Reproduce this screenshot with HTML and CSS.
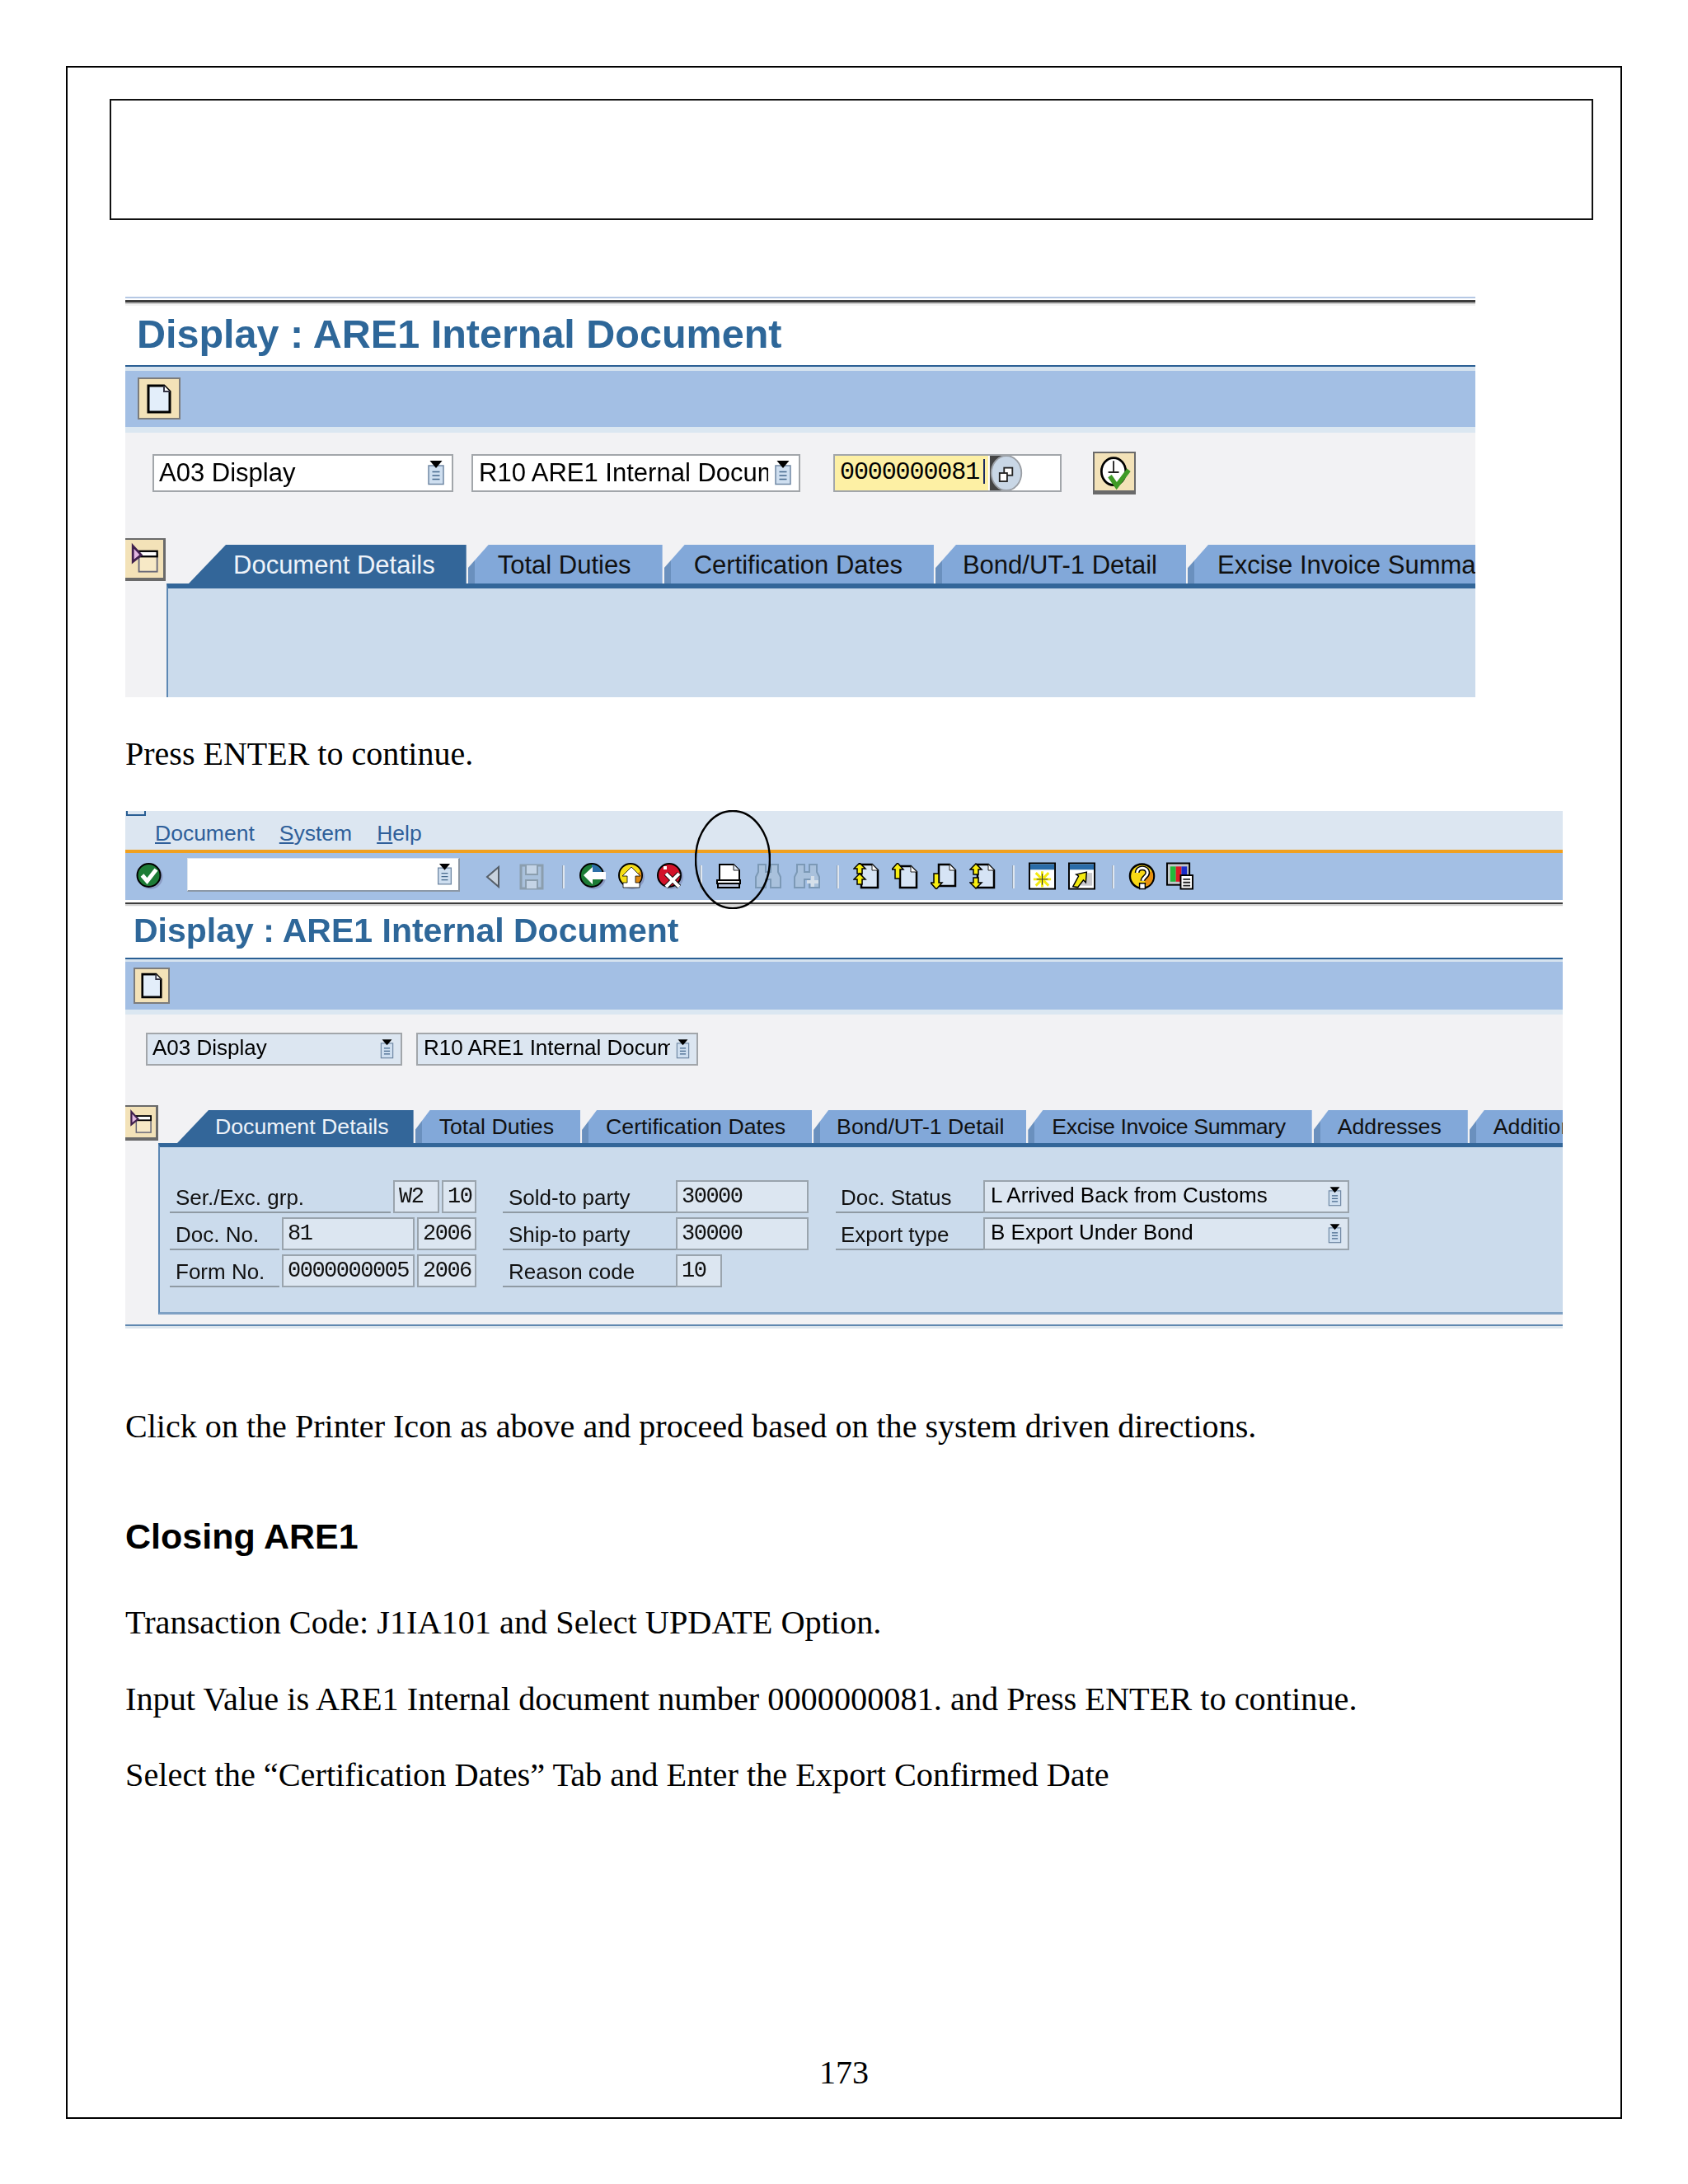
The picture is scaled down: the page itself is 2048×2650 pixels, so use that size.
FILE: index.html
```html
<!DOCTYPE html>
<html lang="en">
<head>
  <meta charset="UTF-8">
  <title>Closing ARE1</title>
  <link rel="stylesheet" href="styles.css">
</head>
<body>
  <svg class="defs">
    <symbol id="ic-drop" viewBox="0 0 16 20">
      <rect x="2" y="4" width="12" height="15" fill="#cfdff0" stroke="#7088a4"/>
      <path d="M5 9h6M5 12h6M5 15h6" stroke="#46688c"/>
      <path d="M3 0h10L8 6z" fill="#000"/>
    </symbol>
    <symbol id="ic-page" viewBox="0 0 30 36">
      <path d="M2 2h19l7 7v25H2z" fill="#e3eefa" stroke="#000" stroke-width="3"/>
      <path d="M21 2v7h7" fill="#fff" stroke="#334" stroke-width="2"/>
    </symbol>
    <symbol id="ic-side" viewBox="0 0 48 50">
      <rect x="17" y="19" width="24" height="23" fill="#f7e9c6" stroke="#667" stroke-width="2"/>
      <rect x="12" y="15" width="29" height="7" fill="#fff" stroke="#000" stroke-width="2.5"/>
      <path d="M9 8l11 12-11 9z" fill="#e2b8e2" stroke="#40204e" stroke-width="3"/>
    </symbol>
    <symbol id="ic-clock" viewBox="0 0 50 50">
      <ellipse cx="24" cy="24" rx="16" ry="18" fill="#fff" stroke="#000" stroke-width="3"/>
      <path d="M24 10v15M17 25h14" stroke="#222" stroke-width="2"/>
      <path d="M19 30l9 13L44 22" fill="none" stroke="#3f9a26" stroke-width="6"/>
    </symbol>
    <symbol id="ic-search" viewBox="0 0 44 46">
      <rect x="0" y="0" width="26" height="46" fill="#444"/>
      <ellipse cx="22" cy="23" rx="20" ry="23" fill="#c9d7e6" stroke="#9a9ea4" stroke-width="2"/>
      <rect x="19" y="16" width="11" height="10" fill="#fff" stroke="#222" stroke-width="2"/>
      <rect x="13" y="23" width="10" height="11" fill="#fff" stroke="#222" stroke-width="2"/>
    </symbol>
    <symbol id="ic-ok" viewBox="0 0 32 32">
      <circle cx="17" cy="17" r="15" fill="#8a9bc4"/>
      <circle cx="15" cy="15" r="14" fill="#1d7c36" stroke="#000" stroke-width="2"/>
      <path d="M7 15l6 7L24 8" fill="none" stroke="#fff" stroke-width="5"/>
    </symbol>
    <symbol id="ic-back" viewBox="0 0 32 32">
      <circle cx="17" cy="17" r="15" fill="#8a9bc4"/>
      <circle cx="15" cy="15" r="14" fill="#1d7c36" stroke="#000" stroke-width="2"/>
      <path d="M15 2a13 13 0 0 1 13 13h-13z" fill="#2c6fa8"/>
      <path d="M5 15L16 5v6h16v9H16v6z" fill="#fff"/>
    </symbol>
    <symbol id="ic-up" viewBox="0 0 32 32">
      <circle cx="17" cy="17" r="15" fill="#8a9bc4"/>
      <circle cx="15" cy="15" r="14" fill="#f6de18" stroke="#000" stroke-width="2"/>
      <path d="M27 10a13 13 0 0 1-8 18l-2-10z" fill="#e08a10"/>
      <path d="M16 5l11 11h-6v8h5v6H6v-6h5v-8H5z" fill="#fff" stroke="#000" stroke-width="0.8"/>
    </symbol>
    <symbol id="ic-cancel" viewBox="0 0 32 32">
      <circle cx="17" cy="17" r="15" fill="#8a9bc4"/>
      <circle cx="15" cy="15" r="14" fill="#d3122a" stroke="#000" stroke-width="2"/>
      <rect x="8" y="4" width="4" height="4" fill="#fff"/>
      <path d="M11 13l16 16M27 13L11 29" stroke="#000" stroke-width="6"/>
      <path d="M11 13l16 16M27 13L11 29" stroke="#fff" stroke-width="4"/>
    </symbol>
    <symbol id="ic-print" viewBox="0 0 32 32">
      <path d="M4 2h17l7 7v13H4z" fill="#fff" stroke="#000" stroke-width="2"/>
      <path d="M21 2v7h7" fill="#dfe8f4" stroke="#222"/>
      <rect x="1" y="21" width="28" height="4" fill="#f4f4f4" stroke="#000" stroke-width="2"/>
      <rect x="2" y="25" width="26" height="5" fill="#b9c4dc" stroke="#000" stroke-width="2"/>
    </symbol>
    <symbol id="ic-find" viewBox="0 0 32 32">
      <path d="M4 2h9v9h6V2h9v9l3 6v13H19V20h-6v10H1V17l3-6z" fill="#a9c1dc" stroke="#7c99b6" stroke-width="2"/>
    </symbol>
    <symbol id="ic-findnext" viewBox="0 0 32 32">
      <path d="M4 2h9v9h6V2h9v9l3 6v13H19V20h-6v10H1V17l3-6z" fill="#a9c1dc" stroke="#7c99b6" stroke-width="2"/>
      <path d="M23 16v13M16 23h14" stroke="#d6e0ea" stroke-width="4"/>
    </symbol>
    <symbol id="ic-first" viewBox="0 0 32 32">
      <path d="M10 2h13l7 7v21H10z" fill="#d6e4f5" stroke="#000" stroke-width="2.5"/>
      <path d="M23 2v7h7" fill="#fff" stroke="#222"/>
      <path d="M8 0l7 7h-4v6H5V7H1z" fill="#f8ee12" stroke="#000" stroke-width="1.5"/>
      <path d="M8 13l7 7h-4v6H5v-6H1z" fill="#f8ee12" stroke="#000" stroke-width="1.5"/>
    </symbol>
    <symbol id="ic-prev" viewBox="0 0 32 32">
      <path d="M10 4h13l7 7v19H10z" fill="#d6e4f5" stroke="#000" stroke-width="2.5"/>
      <path d="M23 4v7h7" fill="#fff" stroke="#222"/>
      <path d="M7 0l7 8h-4v11H4V8H0z" fill="#f8ee12" stroke="#000" stroke-width="1.5"/>
    </symbol>
    <symbol id="ic-next" viewBox="0 0 32 32">
      <path d="M10 2h13l7 7v19H10z" fill="#d6e4f5" stroke="#000" stroke-width="2.5"/>
      <path d="M23 2v7h7" fill="#fff" stroke="#222"/>
      <path d="M7 32l7-8h-4V13H4v11H0z" fill="#f8ee12" stroke="#000" stroke-width="1.5"/>
    </symbol>
    <symbol id="ic-last" viewBox="0 0 32 32">
      <path d="M10 2h13l7 7v21H10z" fill="#d6e4f5" stroke="#000" stroke-width="2.5"/>
      <path d="M23 2v7h7" fill="#fff" stroke="#222"/>
      <path d="M8 1l7 7h-4v6H5V8H1z" fill="#f8ee12" stroke="#000" stroke-width="1.5"/>
      <path d="M8 31l7-7h-4v-6H5v6H1z" fill="#f8ee12" stroke="#000" stroke-width="1.5"/>
    </symbol>
    <symbol id="ic-newwin" viewBox="0 0 34 34">
      <rect x="1" y="1" width="32" height="32" fill="#fff" stroke="#000" stroke-width="2"/>
      <rect x="2" y="2" width="30" height="7" fill="#2a6ca8"/>
      <path d="M17 11v20M6 21h22M9 13l16 16M25 13L9 29" stroke="#f4ea10" stroke-width="3"/>
      <path d="M17 14v14M10 21h14" stroke="#333" stroke-width="1"/>
    </symbol>
    <symbol id="ic-shortcut" viewBox="0 0 34 34">
      <rect x="1" y="1" width="32" height="32" fill="#fff" stroke="#000" stroke-width="2"/>
      <rect x="2" y="2" width="30" height="7" fill="#2a6ca8"/>
      <rect x="16" y="13" width="14" height="16" fill="#c8c8cc"/>
      <path d="M6 30l7-13-3-2 13-3-1 13-3-3-7 9z" fill="#f4ea10" stroke="#000" stroke-width="1.5"/>
    </symbol>
    <symbol id="ic-help" viewBox="0 0 34 34">
      <circle cx="17" cy="17" r="15" fill="#f8d816" stroke="#000" stroke-width="2.5"/>
      <path d="M29 10a14 14 0 0 1-6 20l-3-8z" fill="#e8900e"/>
      <path d="M11 13c0-8 13-8 13 0 0 5-6 5-6 10" fill="none" stroke="#000" stroke-width="6"/>
      <path d="M11 13c0-8 13-8 13 0 0 5-6 5-6 10" fill="none" stroke="#fff" stroke-width="3"/>
      <rect x="14" y="26" width="7" height="7" fill="#fff" stroke="#000" stroke-width="1.5"/>
    </symbol>
    <symbol id="ic-layout" viewBox="0 0 34 34">
      <rect x="1" y="1" width="28" height="27" fill="#c4c8cc" stroke="#000" stroke-width="2"/>
      <rect x="5" y="5" width="7" height="19" fill="#22b83a"/>
      <rect x="12" y="5" width="7" height="19" fill="#dc1a26"/>
      <rect x="19" y="5" width="7" height="19" fill="#1c2cc8"/>
      <rect x="18" y="16" width="15" height="17" fill="#fff" stroke="#000" stroke-width="2"/>
      <path d="M21 21h9M21 25h9M21 29h9" stroke="#222" stroke-width="2"/>
    </symbol>
  </svg>

  <div class="page-frame">
    <div class="header-box"></div>

    <!-- first screenshot -->
    <div class="shot shot-one">
      <div class="top-rule"></div>
      <div class="sap-title">Display : ARE1 Internal Document</div>
      <div class="title-rule"></div>
      <div class="app-bar">
        <div class="square-btn"><svg class="ic-newpage"><use href="#ic-page"/></svg></div>
      </div>
      <div class="app-bar-foot"></div>
      <div class="gray-body">
        <div class="select-row">
          <div class="sel sel-a"><span class="sel-text">A03 Display</span><svg class="ic-dd"><use href="#ic-drop"/></svg></div>
          <div class="sel sel-b"><span class="sel-text">R10 ARE1 Internal Document</span><svg class="ic-dd"><use href="#ic-drop"/></svg></div>
          <div class="key-field">
            <span class="key-value">0000000081</span>
            <svg class="ic-search"><use href="#ic-search"/></svg>
          </div>
          <div class="clock-btn"><svg class="ic-clock"><use href="#ic-clock"/></svg></div>
        </div>
        <div class="tab-strip">
          <div class="side-btn"><svg class="ic-side"><use href="#ic-side"/></svg></div>
          <div class="tabs">
            <div class="tab active">Document Details</div>
            <div class="tab">Total Duties</div>
            <div class="tab">Certification Dates</div>
            <div class="tab tab-bond">Bond/UT-1 Detail</div>
            <div class="tab tab-excise">Excise Invoice Summary</div>
          </div>
        </div>
        <div class="panel"></div>
      </div>
    </div>

    <p class="doc-text press-text">Press ENTER to continue.</p>

    <!-- second screenshot -->
    <div class="shot shot-two">
      <div class="menu-bar">
        <span class="corner-mark"></span>
        <span class="menu-item"><u>D</u>ocument</span>
        <span class="menu-item"><u>S</u>ystem</span>
        <span class="menu-item"><u>H</u>elp</span>
      </div>
      <div class="sys-bar">
        <svg class="ti ti-ok"><use href="#ic-ok"/></svg>
        <div class="cmd-field"><svg class="ic-dd"><use href="#ic-drop"/></svg></div>
        <svg class="ti-arrow" viewBox="0 0 18 28"><path d="M16 2v24L2 14z" fill="#c9d3de" stroke="#555e68" stroke-width="2"/></svg>
        <svg class="ti-save" viewBox="0 0 30 32"><path d="M2 2h26v28H2z" fill="#a9c1dc" stroke="#8b9eae" stroke-width="3"/><path d="M8 2v11h14V2M8 30V20h14v10" fill="#c4d4e6" stroke="#8b9eae" stroke-width="2"/></svg>
        <span class="sep first-sep"></span>
        <svg class="ti"><use href="#ic-back"/></svg>
        <svg class="ti"><use href="#ic-up"/></svg>
        <svg class="ti"><use href="#ic-cancel"/></svg>
        <span class="sep"></span>
        <svg class="ti"><use href="#ic-print"/></svg>
        <svg class="ti"><use href="#ic-find"/></svg>
        <svg class="ti"><use href="#ic-findnext"/></svg>
        <span class="sep"></span>
        <svg class="ti"><use href="#ic-first"/></svg>
        <svg class="ti"><use href="#ic-prev"/></svg>
        <svg class="ti"><use href="#ic-next"/></svg>
        <svg class="ti"><use href="#ic-last"/></svg>
        <span class="sep"></span>
        <svg class="ti ti-wide"><use href="#ic-newwin"/></svg>
        <svg class="ti ti-wide"><use href="#ic-shortcut"/></svg>
        <span class="sep"></span>
        <svg class="ti ti-wide ti-help"><use href="#ic-help"/></svg>
        <svg class="ti ti-wide"><use href="#ic-layout"/></svg>
      </div>
      <div class="sys-foot"></div>
      <div class="sap-title">Display : ARE1 Internal Document</div>
      <div class="title-rule"></div>
      <div class="app-bar">
        <div class="square-btn"><svg class="ic-newpage"><use href="#ic-page"/></svg></div>
      </div>
      <div class="app-bar-foot"></div>
      <div class="gray-body">
        <div class="select-row">
          <div class="sel sel-a"><span class="sel-text">A03 Display</span><svg class="ic-dd"><use href="#ic-drop"/></svg></div>
          <div class="sel sel-b"><span class="sel-text">R10 ARE1 Internal Document</span><svg class="ic-dd"><use href="#ic-drop"/></svg></div>
        </div>
        <div class="tab-strip">
          <div class="side-btn"><svg class="ic-side"><use href="#ic-side"/></svg></div>
          <div class="tabs">
            <div class="tab active">Document Details</div>
            <div class="tab">Total Duties</div>
            <div class="tab">Certification Dates</div>
            <div class="tab tab-bond">Bond/UT-1 Detail</div>
            <div class="tab tab-excise">Excise Invoice Summary</div>
            <div class="tab">Addresses</div>
            <div class="tab">Additional Data</div>
          </div>
        </div>
        <div class="panel">
          <div class="form-col col-one">
            <div class="form-row"><span class="lbl">Ser./Exc. grp.</span><span class="fld w56">W2</span><span class="fld w42">10</span></div>
            <div class="form-row"><span class="lbl">Doc. No.</span><span class="fld w161">81</span><span class="fld w72">2006</span></div>
            <div class="form-row"><span class="lbl">Form No.</span><span class="fld w161">0000000005</span><span class="fld w72">2006</span></div>
          </div>
          <div class="form-col col-two">
            <div class="form-row"><span class="lbl">Sold-to party</span><span class="fld w161">30000</span></div>
            <div class="form-row"><span class="lbl">Ship-to party</span><span class="fld w161">30000</span></div>
            <div class="form-row short-row"><span class="lbl">Reason code</span><span class="fld w56">10</span></div>
          </div>
          <div class="form-col col-three">
            <div class="form-row"><span class="lbl">Doc. Status</span><span class="fld-sel"><span class="sel-text">L Arrived Back from Customs</span><svg class="ic-dd"><use href="#ic-drop"/></svg></span></div>
            <div class="form-row"><span class="lbl">Export type</span><span class="fld-sel"><span class="sel-text">B Export Under Bond</span><svg class="ic-dd"><use href="#ic-drop"/></svg></span></div>
          </div>
        </div>
      </div>
      <div class="shot-foot"></div>
      <svg class="print-circle" viewBox="0 0 92 120"><ellipse cx="46" cy="60" rx="45" ry="59" fill="none" stroke="#000" stroke-width="2.5"/></svg>
    </div>

    <p class="doc-text click-text">Click on the Printer Icon as above and proceed based on the system driven directions.</p>

    <h2 class="doc-heading">Closing ARE1</h2>

    <p class="doc-text trans-text">Transaction Code: J1IA101 and Select UPDATE Option.</p>
    <p class="doc-text input-text">Input Value is ARE1 Internal document number 0000000081. and Press ENTER to continue.</p>
    <p class="doc-text select-text">Select the “Certification Dates” Tab and Enter the Export Confirmed Date</p>

    <div class="page-num">173</div>
  </div>
</body>
</html>
```

FILE: styles.css
```css
body {
  margin: 0;
  background-color: #fff;
  color: #000;
  font-family: "Liberation Sans", Arial, sans-serif;
}

.defs {
  display: none;
}

.page-frame {
  box-sizing: border-box;
  display: flex;
  flex-direction: column;
  width: 1888px;
  height: 2491px;
  margin: 80px 0 0 80px;
  padding: 0 0 30px 70px;
  border: 2px solid #000;
}

.header-box {
  box-sizing: border-box;
  width: 1800px;
  height: 147px;
  margin: 38px 0 0 -19px;
  border: 2px solid #111;
}

/* Document text */
.doc-text {
  margin: 0;
  font-family: "Liberation Serif", "Times New Roman", serif;
  font-size: 40.3px;
  line-height: 48px;
  white-space: nowrap;
}

.press-text { margin-top: 45px; font-size: 40px; }
.click-text { margin-top: 95px; font-size: 40.1px; }
.trans-text { margin-top: 55px; }
.input-text { margin-top: 45px; }
.select-text { margin-top: 44px; }

.doc-heading {
  margin: 83px 0 0;
  font-size: 43px;
  line-height: 52px;
  font-weight: bold;
}

.page-num {
  margin-top: auto;
  margin-left: -70px;
  text-align: center;
  font-family: "Liberation Serif", "Times New Roman", serif;
  font-size: 40px;
  line-height: 48px;
}

/* Screenshots */
.shot {
  position: relative;
  filter: blur(0.4px);
}

.shot-one {
  width: 1638px;
  margin-top: 93px;
}

.shot-two {
  width: 1744px;
  margin-top: 45px;
}

.top-rule {
  height: 11px;
  background: linear-gradient(#b5c8e4 0 2px, #fff 2px 4px, #3c3c3c 4px 7px, #c8c8c8 7px 9px, #f2f2f2 9px);
}

.sap-title {
  font-weight: bold;
  color: #2e6799;
  white-space: nowrap;
}

.shot-one .sap-title {
  height: 72px;
  padding-left: 14px;
  font-size: 48.5px;
  line-height: 69px;
}

.shot-two .sap-title {
  height: 62px;
  padding-left: 10px;
  font-size: 41px;
  line-height: 58px;
}

.title-rule {
  border-top: 2px solid #2a5f94;
  background-color: #d6e3ef;
}

.shot-one .title-rule { height: 5px; }
.shot-two .title-rule { height: 3px; }

.app-bar {
  box-sizing: border-box;
  background-color: #a3bfe4;
}

.shot-one .app-bar {
  height: 68px;
  padding: 8px 0 0 15px;
}

.shot-two .app-bar {
  height: 58px;
  padding: 7px 0 0 10px;
}

.square-btn {
  box-sizing: border-box;
  display: flex;
  align-items: center;
  justify-content: center;
  background-color: #f3e2b8;
  border: 2px solid #7c7c7c;
}

.shot-one .square-btn { width: 52px; height: 51px; }
.shot-two .square-btn { width: 44px; height: 44px; }

.shot-one .ic-newpage { width: 30px; height: 36px; }
.shot-two .ic-newpage { width: 26px; height: 32px; }

.app-bar-foot {
  height: 6px;
  background-color: #dbe7f1;
}

.shot-one .app-bar-foot {
  height: 7px;
}

.gray-body {
  background-color: #f2f2f4;
}

/* Selects */
.select-row {
  display: flex;
  align-items: center;
}

.shot-one .select-row {
  height: 46px;
  padding: 26px 0 0 33px;
}

.shot-two .select-row {
  height: 40px;
  padding: 22px 0 0 25px;
}

.sel {
  box-sizing: border-box;
  display: flex;
  align-items: center;
  height: 100%;
  border: 2px solid #a2a6aa;
}

.sel-text {
  flex: 1;
  min-width: 0;
  overflow: hidden;
  white-space: nowrap;
}

.shot-one .sel {
  padding: 0 7px 0 7px;
  background-color: #fff;
  font-size: 31px;
  line-height: 38px;
}

.shot-one .sel-a { width: 365px; padding-left: 6px; }
.shot-one .sel-b { width: 399px; margin: 0 40px 0 22px; }
.shot-one .ic-dd { width: 24px; height: 30px; margin-left: 6px; flex-shrink: 0; }

.shot-two .sel {
  padding: 0 7px 4px 7px;
  background-color: #dce6f1;
  font-size: 26px;
  line-height: 32px;
}

.shot-two .sel-a { width: 311px; padding-left: 6px; }
.shot-two .sel-b { width: 342px; margin-left: 17px; }
.shot-two .sel .ic-dd,
.fld-sel .ic-dd { width: 19px; height: 28px; margin-left: 6px; flex-shrink: 0; }
.shot-two .sel .ic-dd { margin-top: 4px; }

.key-field {
  box-sizing: border-box;
  display: flex;
  width: 277px;
  height: 46px;
  background-color: #fff;
  border: 2px solid #a2a6aa;
}

.key-value {
  box-sizing: border-box;
  width: 186px;
  padding-left: 6px;
  background-color: #fdf0a4;
  font-family: "Liberation Mono", "Courier New", monospace;
  font-size: 30px;
  letter-spacing: -1.1px;
  line-height: 40px;
}

.key-value::after {
  content: "";
  display: inline-block;
  width: 2px;
  height: 30px;
  margin-left: 5px;
  vertical-align: -6px;
  background-color: #1a2a60;
}

.ic-search {
  width: 44px;
  height: 42px;
}

.clock-btn {
  box-sizing: border-box;
  display: flex;
  align-items: center;
  justify-content: center;
  width: 52px;
  height: 52px;
  margin-left: 38px;
  background-color: #f3e2b8;
  border: 2px solid #6a6a6a;
  border-bottom-width: 5px;
}

.ic-clock {
  width: 48px;
  height: 46px;
}

/* Tabs */
.tab-strip {
  display: flex;
  align-items: flex-end;
}

.shot-one .tab-strip {
  height: 55px;
  margin-top: 56px;
}

.shot-two .tab-strip {
  height: 46px;
  margin-top: 48px;
}

.side-btn {
  box-sizing: border-box;
  flex-shrink: 0;
  align-self: flex-start;
  background-color: #f3e2b8;
  border-top: 2px solid #6a6a6a;
  border-right: 3px solid #6a6a6a;
  border-bottom: 4px solid #6a6a6a;
}

.shot-one .side-btn { width: 49px; height: 52px; }
.shot-two .side-btn { width: 40px; height: 43px; }

.ic-side {
  display: block;
  width: 100%;
  height: 100%;
}

.tabs {
  display: flex;
  flex: 1;
  min-width: 0;
  gap: 2px;
  overflow: hidden;
}

.shot-one .tabs { margin-left: 28px; }
.shot-two .tabs { margin-left: 23px; }

.tab {
  --knee: 60%;
  flex-shrink: 0;
  background: linear-gradient(90deg, #6a90be 8px, #82a8d9 8px);
  color: #111;
  white-space: nowrap;
  clip-path: polygon(var(--slant) 0, 100% 0, 100% 100%, 0 100%, 0 var(--knee));
}

.tab.active {
  --knee: 100%;
  background: #336699;
  color: #eef3f9;
}

.shot-one .tab {
  --slant: 25px;
  height: 47px;
  padding: 0 38px 0 36px;
  font-size: 31px;
  line-height: 50px;
}

.shot-one .tab.active {
  --slant: 45px;
  padding-left: 54px;
}

.shot-one .tab-bond {
  padding: 0 35px 0 33px;
}

.shot-two .tab {
  --slant: 18px;
  height: 40px;
  padding: 0 32px 0 29px;
  font-size: 26.7px;
  line-height: 41px;
}

.shot-two .tab.active {
  --slant: 38px;
  padding: 0 30px 0 46px;
}

.shot-two .tab-bond {
  padding: 0 27px 0 28px;
}

.shot-two .tab-excise {
  letter-spacing: -0.4px;
}

.panel {
  box-sizing: border-box;
  background-color: #cbdbec;
  border-top: 6px solid #336699;
  border-left: 2px solid #5d88b4;
}

.shot-one .panel {
  height: 138px;
  margin-left: 50px;
}

.shot-two .panel {
  display: flex;
  gap: 32px;
  height: 208px;
  margin-left: 40px;
  padding: 40px 0 0 12px;
  border-top-width: 5px;
  border-bottom: 3px solid #7fa1c4;
}

/* Form fields */
.form-col {
  display: flex;
  flex-direction: column;
  gap: 5px;
}

.col-one { width: 372px; }
.col-two { width: 371px; margin-right: 1px; }
.col-three { width: 623px; }

.form-row {
  display: flex;
  gap: 3px;
  height: 40px;
}

.short-row {
  width: 266px;
}

.lbl {
  box-sizing: border-box;
  flex: 1;
  padding-left: 7px;
  font-size: 26px;
  line-height: 42px;
  color: #111;
  white-space: nowrap;
  border-bottom: 2px solid #8f9aa3;
}

.col-three .lbl {
  padding-left: 6px;
}

.form-row .fld,
.form-row .fld-sel {
  box-sizing: border-box;
  flex-shrink: 0;
  background-color: #dce6f1;
  border: 2px solid #9aa4ad;
}

.col-two .lbl,
.col-three .lbl {
  margin-right: -3px;
}

.fld {
  padding-left: 5px;
  font-family: "Liberation Mono", "Courier New", monospace;
  font-size: 27px;
  letter-spacing: -1.5px;
  line-height: 36px;
  color: #111;
}

.w42 { width: 42px; }
.w56 { width: 56px; }
.w72 { width: 72px; }
.w161 { width: 161px; }

.fld-sel {
  display: flex;
  width: 444px;
  padding: 0 6px 0 7px;
  font-size: 26px;
  line-height: 32px;
}

.fld-sel .ic-dd {
  margin-top: 4px;
}

/* Menu and system bar */
.menu-bar {
  box-sizing: border-box;
  position: relative;
  display: flex;
  gap: 30px;
  height: 47px;
  padding: 7px 0 0 36px;
  background-color: #dce6f1;
  font-size: 26.5px;
  line-height: 40px;
  color: #2f5f9a;
}

.corner-mark {
  position: absolute;
  top: 0;
  left: 1px;
  width: 24px;
  height: 6px;
  box-sizing: border-box;
  border: 2px solid #2a5f94;
  border-top: none;
}

.sys-bar {
  box-sizing: border-box;
  display: flex;
  align-items: center;
  gap: 15px;
  height: 61px;
  padding: 0 0 0 13px;
  background-color: #a3bfe4;
  border-top: 4px solid #f0a020;
}

.ti {
  flex-shrink: 0;
  width: 32px;
  height: 32px;
  margin-top: -2px;
}

.ti-ok {
  width: 33px;
  margin-right: 14px;
}

.ti-wide {
  width: 33px;
  height: 34px;
}

.ti-help {
  margin-right: -2px;
}

.ti-arrow {
  flex-shrink: 0;
  width: 18px;
  height: 28px;
  margin-left: 16px;
}

.ti-save {
  flex-shrink: 0;
  width: 30px;
  height: 32px;
  margin-left: 8px;
}

.cmd-field {
  box-sizing: border-box;
  display: flex;
  align-items: center;
  justify-content: flex-end;
  flex-shrink: 0;
  width: 331px;
  height: 41px;
  margin-top: -5px;
  padding-right: 6px;
  background-color: #fff;
  border-right: 2px solid #8c98a6;
  border-bottom: 2px solid #8c98a6;
  border-top: 1px solid #dfe6ee;
  border-left: 1px solid #dfe6ee;
}

.cmd-field .ic-dd {
  width: 21px;
  height: 30px;
}

.sep {
  flex-shrink: 0;
  width: 3px;
  height: 28px;
  margin: 0 2px 0 5px;
  background-color: #dfe6ee;
  border-left: 1px solid #8fa0b4;
  box-sizing: border-box;
}

.first-sep {
  margin: 0 3px 0 7px;
}

.sys-foot {
  height: 8px;
  background: linear-gradient(#fff 0 3px, #3c3c3c 3px 5px, #d0d0d0 5px 7px, #f4f4f4 7px);
}

.shot-foot {
  height: 17px;
  background: linear-gradient(#f2f2f4 0 12px, #5f88b0 12px 14px, #dde6ee 14px);
}

/* Hand-drawn circle around the printer */
.print-circle {
  position: absolute;
  top: -1px;
  left: 691px;
  width: 92px;
  height: 120px;
}
```
